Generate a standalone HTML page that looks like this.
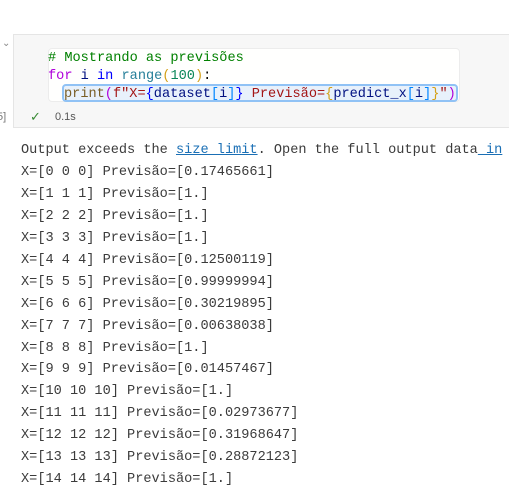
<html><head><style>
body{margin:0;width:509px;height:491px;background:#fff;overflow:hidden;position:relative;font-family:"Liberation Mono",monospace;}
.cell{position:absolute;left:13px;top:34px;width:500px;height:94px;background:#f7f7f7;border:1px solid #e5e5e5;box-sizing:border-box;}
.ed{position:absolute;left:48px;top:48px;width:412px;height:54px;background:#fffffe;border:1px solid #ececec;border-radius:4px;box-sizing:border-box;}
.l{position:absolute;font-size:13.6px;white-space:pre;line-height:18px;}
.sel{position:absolute;left:62px;top:84px;width:396px;height:18px;border:2px solid #90c2f5;border-radius:4px;box-sizing:border-box;background:#e8f1fb;}
.o{position:absolute;left:21px;font-size:13.6px;color:#3b3b3b;white-space:pre;line-height:20px;}
a{color:#1a6fb5;text-decoration:underline;}
</style></head><body>
<div style="position:absolute;left:2px;top:38px;color:#888;font-size:10px;font-family:'Liberation Sans',sans-serif">&#8964;</div>
<div class="cell"></div>
<div class="ed"></div>
<div class="sel"></div>
<div class="l" style="left:48px;top:50px;color:#008000"># Mostrando as previsões</div>
<div class="l" style="left:48px;top:68px"><span style="color:#af00db">for</span> <span style="color:#001080">i</span> <span style="color:#0000ff">in</span> <span style="color:#267f99">range</span><span style="color:#d4a017">(</span><span style="color:#098658">100</span><span style="color:#d4a017">)</span>:</div>
<div class="l" style="left:64px;top:86px"><span style="color:#795e26">print</span><span style="color:#af00db">(</span><span style="color:#a31515">f"X=</span><span style="color:#0000ff">{</span><span style="color:#001080">dataset</span><span style="color:#0086ff">[</span><span style="color:#001080">i</span><span style="color:#0086ff">]</span><span style="color:#0000ff">}</span><span style="color:#a31515"> Previsão=</span><span style="color:#d4a017">{</span><span style="color:#001080">predict_x</span><span style="color:#0086ff">[</span><span style="color:#001080">i</span><span style="color:#0086ff">]</span><span style="color:#d4a017">}</span><span style="color:#a31515">"</span><span style="color:#af00db">)</span></div>
<div style="position:absolute;left:-3px;top:111px;font-size:11px;color:#777;font-family:'Liberation Sans',sans-serif">5]</div>
<div style="position:absolute;left:30px;top:110px;font-size:13px;color:#388a34;font-family:'DejaVu Sans',sans-serif">✓</div>
<div style="position:absolute;left:55px;top:111px;font-size:11px;color:#555;font-family:'Liberation Sans',sans-serif">0.1s</div>
<div class="o" style="top:141px">Output exceeds the <a>size limit</a>. Open the full output data<a> in</a></div>
<div class="o" style="top:162px;line-height:21.93px">X=[0 0 0] Previsão=[0.17465661]
X=[1 1 1] Previsão=[1.]
X=[2 2 2] Previsão=[1.]
X=[3 3 3] Previsão=[1.]
X=[4 4 4] Previsão=[0.12500119]
X=[5 5 5] Previsão=[0.99999994]
X=[6 6 6] Previsão=[0.30219895]
X=[7 7 7] Previsão=[0.00638038]
X=[8 8 8] Previsão=[1.]
X=[9 9 9] Previsão=[0.01457467]
X=[10 10 10] Previsão=[1.]
X=[11 11 11] Previsão=[0.02973677]
X=[12 12 12] Previsão=[0.31968647]
X=[13 13 13] Previsão=[0.28872123]
X=[14 14 14] Previsão=[1.]</div>
</body></html>
